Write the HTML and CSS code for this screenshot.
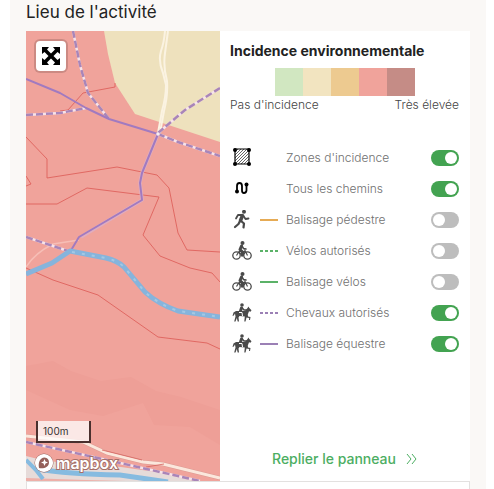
FILE: index.html
```html
<!DOCTYPE html>
<html lang="fr">
<head>
  <meta charset="UTF-8">
  <meta name="viewport" content="width=device-width, initial-scale=1.0">
  <title>Lieu de l'activité</title>
  <link rel="stylesheet" href="styles.css">
</head>
<body>
  <main class="section">
    <h1>Lieu de l'activité</h1>

    <div class="card">
      <div class="map">
        <svg class="map-canvas" viewBox="0 0 194 450" preserveAspectRatio="xMidYMid slice" aria-hidden="true">
          <rect width="194" height="450" fill="#f0a39b"/>
          <path fill="#ee9f97" d="M0 335L27 330 45 340 75 350 105 346 130 360 155 366 194 379V414L164 396 128 394 117 372 77 385 44 379 0 359Z"/>
          <path fill="#eee1bd" d="M78 0L82 23 89 52 109 83 194 111V0Z"/>

          <!-- voie ferrée et rivière en bas -->
          <path fill="#e6dbd9" d="M0 425L20 430 95 436 130 441 168 450H0Z"/>
          <path fill="#eeb0a9" d="M0 447L60 449 100 450H0Z"/>
          <g fill="none" stroke="#86bbe0">
            <path stroke-width="5" d="M12 438Q40 443 94 444L142 451"/>
            <path stroke-width="4" d="M0 429L10 439 17 448"/>
          </g>
          <path fill="none" stroke="#dc9a92" stroke-width="4" d="M0 405L57 411 81 422 117 431 137 433 194 447"/>
          <path fill="none" stroke="#fbe7dc" stroke-width="3" d="M0 405L57 411 81 422 117 431 137 433 194 447"/>
          <path fill="none" stroke="#d5615c" stroke-width=".8" d="M76 419L116 429M120 436L138 433"/>

          <!-- routes -->
          <g fill="none" stroke="#fbf3e2" stroke-width="2">
            <path d="M139 0Q138 12 135 20Q132 30 137 42L140 54Q140 66 136 80L132 102"/>
            <path d="M142 0L139 22Q137 36 141 50Q142 64 138 80L134 102"/>
          </g>
          <path fill="none" stroke="#f6beb6" stroke-width="1.5" d="M0 236Q9 222 27 213L53 209"/>

          <!-- limites des zones -->
          <g fill="none" stroke="#dc5954" stroke-width=".8">
            <path d="M89 52V56L57 62 42 79 34 80"/>
            <path d="M0 106L21 128V147L91 136 131 144 143 157 152 202 161 219 194 221"/>
            <path d="M0 145L5 153 0 155"/>
            <path d="M0 173H31L61 157 133 166 117 204 134 225 164 237 186 242 194 251"/>
            <path d="M0 237L27 249 72 264 132 306 181 312 194 318"/>
          </g>

          <!-- sentiers -->
          <g fill="none" stroke="#f6e3ea" stroke-width="2.500">
            <path d="M47 0L54 34 62 62 83 88"/>
            <path d="M0 84L34 82 60 77"/>
            <path d="M132 102L159 79 194 57"/>
            <path d="M132 103L152 111 194 125"/>
            <path d="M0 206L24 214 42 220"/>
            <path d="M0 411L94 432 174 450"/>
          </g>
          <g fill="none" stroke="#a985b8" stroke-width="2.500" stroke-dasharray="7 3">
            <path d="M47 0L54 34 62 62 83 88"/>
            <path d="M0 84L34 82 60 77"/>
            <path d="M132 102L159 79 194 57"/>
            <path d="M132 103L152 111 194 125"/>
            <path d="M0 206L24 214 42 220"/>
            <path d="M0 411L94 432 174 450"/>
          </g>
          <path fill="none" stroke="#e0adbf" stroke-width="3.500" stroke-linejoin="round" d="M132 103L116 142 114 152 116 169 55 206"/>
          <path fill="none" stroke="#a17ac0" stroke-width="2" stroke-linejoin="round" d="M0 48L34 62 60 77 83 88 132 103 116 142 114 152 116 169 53 206 44 221"/>
          <circle cx="132" cy="103" r="1.8" fill="#faeff2"/>
          <path fill="none" stroke="#86b4dc" stroke-width="5" stroke-linejoin="round" d="M0 243L26 232 44 220 80 227Q92 230 98 236L119 261Q132 273 152 280L194 286"/>
          <path fill="none" stroke="#a3c8e4" stroke-width="2" stroke-dasharray="3 7" d="M46 221L80 227Q92 230 98 236L119 261Q132 273 152 280L194 286"/>
        </svg>

        <button class="expand" type="button" aria-label="Plein écran">
          <svg width="18" height="18" viewBox="0 0 18 18" aria-hidden="true">
            <path d="M0 0H7L5 2.500 9 6.500 13 2.500 11 0H18V7L15.500 5 11.500 9 15.500 13 18 11V18H11L13 15.500 9 11.500 5 15.500 7 18H0V11L2.500 13 6.500 9 2.500 5 0 7Z"/>
          </svg>
        </button>

        <div class="map-footer">
          <div class="scale">100m</div>
          <a class="mapbox" href="#">
            <svg width="20" height="20" viewBox="0 0 20 20" aria-hidden="true">
              <circle cx="10" cy="10" r="9" fill="#fff" stroke="#9d6861"/>
              <path fill="#95605a" d="M5 15C4 9 6 5 10.500 4.500A5 5 0 0 1 15 9.500C15 14 10 16 5 15Z"/>
              <path fill="#fff" d="M10.500 6L11.500 8.500 14 9.500 11.500 10.500 10.500 13 9.500 10.500 7 9.500 9.500 8.500Z"/>
            </svg>
            <span>mapbox</span>
          </a>
        </div>
      </div>

      <div class="panel">
        <h2>Incidence environnementale</h2>
        <div class="swatches">
          <span class="level-1"></span>
          <span class="level-2"></span>
          <span class="level-3"></span>
          <span class="level-4"></span>
          <span class="level-5"></span>
        </div>
        <div class="swatch-labels">
          <span>Pas d'incidence</span>
          <span>Très élevée</span>
        </div>

        <svg class="symbols" aria-hidden="true">
          <symbol id="bike" viewBox="0 0 20 20">
            <g fill="none" stroke="currentColor">
              <circle cx="4.500" cy="14.500" r="3.700" stroke-width="1.300"/>
              <circle cx="15.500" cy="14.500" r="3.700" stroke-width="1.300"/>
              <path stroke-width="1.200" d="M4.500 14.500L7 10.500H13.500L15.500 14.500M7 10.500L10 15 13.500 10.500M12.500 8.500L13.500 10.500"/>
              <path stroke-width="3" stroke-linecap="round" stroke-linejoin="round" d="M9.500 5L8 8.500 10.500 11V14"/>
              <path stroke-width="1.500" stroke-linecap="round" d="M10 5L11.500 7.500 14 8"/>
            </g>
            <circle cx="10.500" cy="2" r="2" fill="currentColor"/>
          </symbol>
          <symbol id="horse" viewBox="0 0 20 20">
            <path fill="currentColor" d="M13 8L15.500 5 16.500 3.500 17.300 5 19.500 7.300 18.500 8.800 17 8.300 15.800 11.500 16 13.500 18.500 14 18 17H17L17.200 15 14.500 14.500 13.500 18.500H12.300L12.800 13.500 7.500 13 6.500 14.500 7 18.500H5.700L4.800 15 3.500 18.500H2.200L3.500 13.500 3 10.500 1.800 12.500 0.500 13 1.500 9.500 4 8Z"/>
            <circle cx="10" cy="2" r="1.800" fill="currentColor"/>
            <path fill="none" stroke="currentColor" stroke-width="3" stroke-linecap="round" d="M9.500 5L8.500 8"/>
            <path fill="none" stroke="currentColor" stroke-width="1.300" d="M10 4.500L12 7 15 7"/>
            <path fill="none" stroke="#fff" d="M7 9.500H10L10.500 13"/>
          </symbol>
          <symbol id="runner" viewBox="0 0 20 20">
            <circle cx="12" cy="1.800" r="2" fill="currentColor"/>
            <g fill="none" stroke="currentColor" stroke-linecap="round" stroke-linejoin="round">
              <path stroke-width="1.800" d="M10.500 5L6 5 4 8.500M11.500 6L13.500 9 16.500 8.500"/>
              <path stroke-width="3.500" d="M10.500 5.500L8.500 10.500"/>
              <path stroke-width="2.200" d="M9 11L12 13.500 11.500 17.500M8 11L6.500 14 3 17"/>
            </g>
          </symbol>
        </svg>

        <ul class="layers">
          <li>
            <svg class="icon black" viewBox="0 0 20 20" aria-hidden="true">
              <path fill="none" stroke="currentColor" stroke-width="1.200" d="M3 1H17V16H3Z"/>
              <path fill="none" stroke="currentColor" stroke-width=".6" d="M3 4L6 1M3 7L9 1M3 10L12 1M3 13L15 1M3 16L17 2M6 16L17 5M9 16L17 8M12 16L17 11M15 16L17 14"/>
              <circle cx="3" cy="2" r="2"/><circle cx="17" cy="2" r="2"/><circle cx="3" cy="16" r="2"/><circle cx="17" cy="16" r="2"/>
            </svg>
            <label for="zones">Zones d'incidence</label>
            <input type="checkbox" id="zones" checked>
          </li>
          <li>
            <svg class="icon black" viewBox="0 0 20 20" aria-hidden="true">
              <path fill="none" stroke="currentColor" stroke-width="1.800" d="M5 12.500V7Q5 4 7.500 4T10 7V11.500Q10 14 12 14T14.500 11.500V6"/>
              <circle cx="5" cy="12.500" r="2"/><circle cx="14.500" cy="5.500" r="2"/>
            </svg>
            <label for="chemins">Tous les chemins</label>
            <input type="checkbox" id="chemins" checked>
          </li>
          <li>
            <svg class="icon" aria-hidden="true"><use href="#runner"/></svg>
            <span class="line orange"></span>
            <label for="pedestre">Balisage pédestre</label>
            <input type="checkbox" id="pedestre">
          </li>
          <li>
            <svg class="icon" aria-hidden="true"><use href="#bike"/></svg>
            <span class="line green dashed"></span>
            <label for="velos">Vélos autorisés</label>
            <input type="checkbox" id="velos">
          </li>
          <li>
            <svg class="icon" aria-hidden="true"><use href="#bike"/></svg>
            <span class="line green"></span>
            <label for="balisage-velos">Balisage vélos</label>
            <input type="checkbox" id="balisage-velos">
          </li>
          <li>
            <svg class="icon" aria-hidden="true"><use href="#horse"/></svg>
            <span class="line purple dashed"></span>
            <label for="chevaux">Chevaux autorisés</label>
            <input type="checkbox" id="chevaux" checked>
          </li>
          <li>
            <svg class="icon" aria-hidden="true"><use href="#horse"/></svg>
            <span class="line purple"></span>
            <label for="equestre">Balisage équestre</label>
            <input type="checkbox" id="equestre" checked>
          </li>
        </ul>

        <button class="collapse" type="button">
          Replier le panneau
          <svg width="11" height="12" viewBox="0 0 11 12" aria-hidden="true">
            <path fill="none" stroke="currentColor" d="M1 1L5 6 1 11M6 1L10 6 6 11"/>
          </svg>
        </button>
      </div>
    </div>

    <div class="next-block"></div>
  </main>
</body>
</html>
```

FILE: styles.css
```css
* {
  box-sizing: border-box;
}

body {
  margin: 0 8px 0 10px;
  background: #fff;
  font-family: Inter, 'Liberation Sans', sans-serif;
  color: #222;
}

.section {
  background: #faf8f6;
  padding: 0 16px;
}

h1 {
  margin: 0;
  padding-bottom: 7px;
  font-size: 17px;
  line-height: 24px;
  font-weight: 400;
}

.card {
  display: grid;
  grid-template-columns: 194fr 250fr;
  background: #fff;
}

/* Carte */
.map {
  position: relative;
  display: flex;
  flex-direction: column;
  justify-content: space-between;
  align-items: flex-start;
  padding: 8px;
  overflow: hidden;
}

.map-canvas {
  position: absolute;
  inset: 0;
  width: 100%;
  height: 100%;
}

.expand {
  position: relative;
  display: flex;
  align-items: center;
  justify-content: center;
  width: 34px;
  height: 34px;
  padding: 0;
  border: 2px solid rgba(0, 0, 0, 0.15);
  border-radius: 6px;
  background: #fff;
  background-clip: padding-box;
  cursor: pointer;
}

.map-footer {
  position: relative;
}

.scale {
  width: 55px;
  height: 22px;
  margin: 0 0 10px 2px;
  padding: 0 5px;
  border: 2px solid #4a302e;
  border-top: 0;
  background: rgba(255, 255, 255, 0.75);
  font-size: 10px;
  line-height: 20px;
  color: #333;
}

.mapbox {
  display: flex;
  align-items: center;
  gap: 2px;
  font-size: 16px;
  line-height: 20px;
  font-weight: 600;
  color: #fff;
  text-decoration: none;
  -webkit-text-stroke: 2px #a56f68;
  paint-order: stroke fill;
}

.mapbox svg {
  flex: none;
}

/* Panneau */
.panel {
  display: flex;
  flex-direction: column;
  min-height: 450px;
  padding: 10px 11px 12px 10px;
}

h2 {
  margin: 0;
  font-size: 14px;
  line-height: 20px;
  font-weight: 700;
}

.swatches {
  display: flex;
  justify-content: center;
  margin-top: 7px;
}

.swatches span {
  width: 28px;
  height: 28px;
}

.level-1 { background: #d1e7c1; }
.level-2 { background: #f2e4c0; }
.level-3 { background: #edca90; }
.level-4 { background: #f0a39b; }
.level-5 { background: #c58c86; }

.swatch-labels {
  display: flex;
  justify-content: space-between;
  font-size: 12px;
  line-height: 18px;
  font-weight: 300;
  color: #444;
}

.symbols {
  display: none;
}

.layers {
  margin: 28px 0 0;
  padding: 0;
  list-style: none;
}

.layers li {
  display: grid;
  grid-template-columns: 22px 18px 1fr 28px;
  column-gap: 8px;
  align-items: center;
  height: 31px;
}

.icon {
  width: 20px;
  height: 20px;
  justify-self: end;
  color: #4a4a4a;
}

.icon.black {
  color: #000;
}

.line {
  height: 2px;
  background: currentColor;
}

.line.dashed {
  background: repeating-linear-gradient(90deg, currentColor 0 3px, transparent 3px 5px);
}

.orange { color: #e6ab55; }
.green { color: #5bb268; }
.purple { color: #9b80b5; }

.layers label {
  grid-column: 3;
  font-size: 12px;
  line-height: 18px;
  font-weight: 300;
  color: #707070;
}

.layers input {
  appearance: none;
  width: 28px;
  height: 16px;
  margin: 0;
  padding: 2px;
  border-radius: 8px;
  background: #bdbdbd;
  cursor: pointer;
}

.layers input::before {
  content: "";
  display: block;
  width: 12px;
  height: 12px;
  border-radius: 50%;
  background: #fff;
}

.layers input:checked {
  background: #43a351;
}

.layers input:checked::before {
  margin-left: auto;
}

.collapse {
  display: flex;
  align-items: center;
  align-self: center;
  gap: 10px;
  margin-top: auto;
  padding: 0;
  border: 0;
  background: none;
  font-family: inherit;
  font-size: 14px;
  line-height: 20px;
  font-weight: 500;
  color: #4cae62;
  cursor: pointer;
}

.next-block {
  height: 8px;
  border: 1px solid #e3e1e0;
  border-bottom: 0;
  background: #fff;
}
```
